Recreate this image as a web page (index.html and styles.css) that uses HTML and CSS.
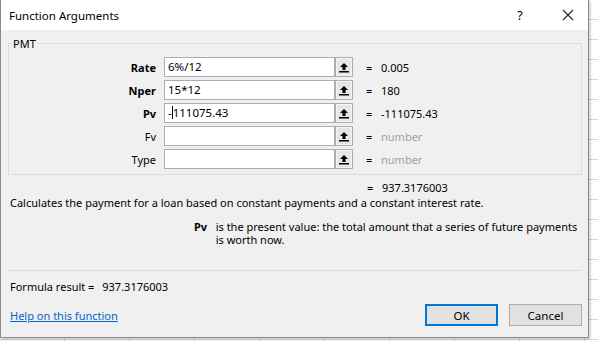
FILE: index.html
```html
<!DOCTYPE html>
<html lang="en">
<head>
    <meta charset="UTF-8">
    <meta name="viewport" content="width=device-width, initial-scale=1.0">
    <title>Function Arguments</title>
    <link rel="stylesheet" href="styles.css">
</head>
<body>
    <div class="dialog">
        <div class="titlebar">
            <span class="title">Function Arguments</span>
            <span class="help">?</span>
            <span class="close">
                <svg width="12" height="12" viewBox="0 0 12 12"><path d="M1 1L11 11M11 1L1 11" stroke="#222" stroke-width="1.1" fill="none"/></svg>
            </span>
        </div>

        <div class="content">
            <fieldset class="group">
                <legend>PMT</legend>
                <div class="arg">
                    <label class="name bold">Rate</label>
                    <div class="field">6%/12</div>
                    <button class="ref"><svg width="10" height="11" viewBox="0 0 10 11"><path d="M5 1L1 5H3.5V8H6.5V5H9Z" fill="#000"/><rect x="0" y="9" width="10" height="1.5" fill="#000"/></svg></button>
                    <span class="eq">=</span>
                    <span class="val">0.005</span>
                </div>
                <div class="arg">
                    <label class="name bold">Nper</label>
                    <div class="field">15*12</div>
                    <button class="ref"><svg width="10" height="11" viewBox="0 0 10 11"><path d="M5 1L1 5H3.5V8H6.5V5H9Z" fill="#000"/><rect x="0" y="9" width="10" height="1.5" fill="#000"/></svg></button>
                    <span class="eq">=</span>
                    <span class="val">180</span>
                </div>
                <div class="arg">
                    <label class="name bold">Pv</label>
                    <div class="field">-<span class="caret"></span>111075.43</div>
                    <button class="ref"><svg width="10" height="11" viewBox="0 0 10 11"><path d="M5 1L1 5H3.5V8H6.5V5H9Z" fill="#000"/><rect x="0" y="9" width="10" height="1.5" fill="#000"/></svg></button>
                    <span class="eq">=</span>
                    <span class="val">-111075.43</span>
                </div>
                <div class="arg">
                    <label class="name">Fv</label>
                    <div class="field"></div>
                    <button class="ref"><svg width="10" height="11" viewBox="0 0 10 11"><path d="M5 1L1 5H3.5V8H6.5V5H9Z" fill="#000"/><rect x="0" y="9" width="10" height="1.5" fill="#000"/></svg></button>
                    <span class="eq">=</span>
                    <span class="val muted">number</span>
                </div>
                <div class="arg">
                    <label class="name">Type</label>
                    <div class="field"></div>
                    <button class="ref"><svg width="10" height="11" viewBox="0 0 10 11"><path d="M5 1L1 5H3.5V8H6.5V5H9Z" fill="#000"/><rect x="0" y="9" width="10" height="1.5" fill="#000"/></svg></button>
                    <span class="eq">=</span>
                    <span class="val muted">number</span>
                </div>
            </fieldset>

            <div class="total"><span class="eq">=</span><span class="val">937.3176003</span></div>
            <p class="desc">Calculates the payment for a loan based on constant payments and a constant interest rate.</p>
            <div class="argdesc">
                <span class="bold">Pv</span>
                <p>is the present value: the total amount that a series of future payments is worth now.</p>
            </div>

            <hr class="sep">

            <div class="result">Formula result = <span class="resval">937.3176003</span></div>

            <div class="footer">
                <a href="#" class="link">Help on this function</a>
                <div class="buttons">
                    <button class="btn primary">OK</button>
                    <button class="btn">Cancel</button>
                </div>
            </div>
        </div>
    </div>
</body>
</html>
```

FILE: styles.css
```css
* { box-sizing: border-box; }
body {
    margin: 0;
    width: 598px;
    height: 341px;
    overflow: hidden;
    font-family: "Noto Sans", "Open Sans", sans-serif;
    font-size: 11px;
    line-height: 15px;
    color: #000;
    background-color: #fff;
    background-image:
        repeating-linear-gradient(to right, transparent 0 64px, #d4d4d4 64px 65px),
        repeating-linear-gradient(to bottom, transparent 0 19px, #d4d4d4 19px 20px);
}
.dialog {
    width: 589px;
    height: 338px;
    background: #f0f0f0;
    border: 1px solid #8a8a8a;
    border-top: none;
    box-shadow: 1px 1px 3px rgba(0,0,0,0.25);
}
.titlebar { height: 30px; background: #fff; display: flex; align-items: center; padding-left: 8px; }
.title { flex: 1; font-size: 11.5px; }
.help { width: 20px; text-align: center; margin-right: 28px; font-size: 12.5px; }
.close { width: 20px; display: flex; justify-content: center; margin-right: 10px; }

.content { padding: 0 6px 0 7px; }
.group { margin: 6px 0 0; padding: 6px 0 5px; border: 1px solid #dcdcdc; }
.group legend { padding: 0 1px; margin-left: 3px; }

.arg { display: flex; align-items: center; height: 20px; margin-top: 3px; }
.arg:first-of-type { margin-top: 0; }
.name { width: 155px; text-align: right; padding-right: 8px; }
.bold { font-weight: bold; }
.field {
    width: 171px;
    height: 20px;
    background: #fff;
    border: 1px solid #abadb3;
    padding: 1px 0 0 3px;
    font-size: 11.5px;
    white-space: nowrap;
}
.caret { display: inline-block; width: 1px; height: 13px; background: #000; vertical-align: -2px; }
.ref {
    width: 18px;
    height: 20px;
    padding: 0;
    margin: 0;
    border: 1px solid #adadad;
    background: #e6e6e6;
    box-shadow: inset 0 0 0 1px #f4f4f4;
    display: flex;
    align-items: center;
    justify-content: center;
}
.eq { margin-left: 13px; width: 15px; }
.muted { color: #a0a0a0; }

.total { display: flex; padding-left: 346px; margin-top: 5px; height: 15px; }
.desc { margin: 0; padding-left: 2px; height: 15px; }
.argdesc { display: flex; margin-top: 10px; padding-left: 186px; line-height: 13px; }
.argdesc .bold { width: 22px; }
.argdesc p { margin: 0; width: 372px; }

.sep { margin: 24px 0 0 0; border: none; border-top: 1px solid #dcdcdc; width: 574px; }
.result { margin-top: 8px; padding-left: 2px; }
.resval { margin-left: 5px; }

.footer { display: flex; align-items: center; justify-content: space-between; margin-top: 10px; padding-left: 2px; }
.link { color: #0066cc; text-decoration: underline; }
.buttons { display: flex; gap: 11px; }
.btn {
    width: 73px;
    height: 22px;
    font-family: inherit;
    font-size: 11.5px;
    background: #e1e1e1;
    border: 1px solid #adadad;
    padding: 0;
}
.primary { border: 2px solid #0078d7; }
```
